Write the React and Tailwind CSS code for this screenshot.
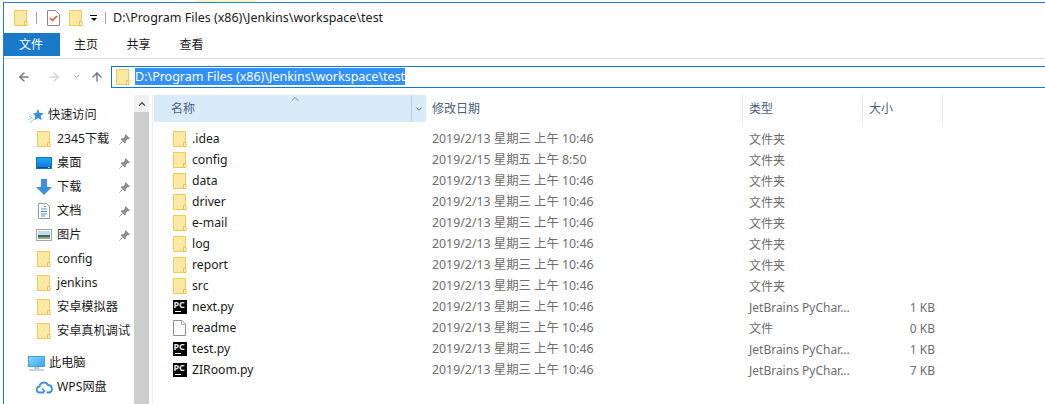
import { ArrowLeft, ArrowRight, ArrowUp, ChevronDown, ChevronUp } from 'lucide-react'

const FONT = { fontFamily: '"Noto Sans", "Noto Sans CJK SC", sans-serif' }

const Folder = () => (
    <svg width="14" height="16" viewBox="0 0 14 16">
        <path d="M.5.5h12v15H.5z" fill="#fde9a6" stroke="#f3c950" />
        <path d="M10.5 15.5v-4h2.500v4z" fill="#fff5cf" stroke="#eec04b" />
    </svg>
)

const PcIcon = () => (
    <div className="w-[14px] h-[14px] bg-black text-[#e8e8e8] text-[9px] leading-[9px] font-bold pl-[1px] relative">
        PC
        <div className="absolute left-[2px] bottom-[2px] w-[6px] h-[1px] bg-white"></div>
    </div>
)

const BlankFile = () => (
    <svg width="13" height="16" viewBox="0 0 13 16">
        <path d="M.5.5h8.5l3.500 3.500v11.500h-12z" fill="#fbfbfb" stroke="#8f8f8f" />
        <path d="M8.500.5v4h4" fill="none" stroke="#b5b5b5" />
    </svg>
)

const Star = () => (
    <svg width="16" height="15" viewBox="0 0 16 15">
        <path d="M10 1l1.600 4 4.200.3-3.200 2.700 1 4.300L10 10l-3.600 2.300 1-4.300-2.600-2.500 3.600-.4z" fill="#2f8fe0" />
        <path d="M0 12l4.500-3M1 8.500l3.500-1M2 14.500l4-3.500" stroke="#8cc0ee" fill="none" />
    </svg>
)

const Desktop = () => (
    <svg width="16" height="12" viewBox="0 0 16 12">
        <defs>
            <linearGradient id="desk" x1="0" y1="0" x2="0" y2="1">
                <stop offset="0" stopColor="#23a8f5" />
                <stop offset="1" stopColor="#0b74d6" />
            </linearGradient>
        </defs>
        <rect x=".5" y=".5" width="15" height="11" fill="url(#desk)" stroke="#0f6fc0" />
        <path d="M1 10.500h14" stroke="#0a4f96" />
        <path d="M12 10.500h1.500" stroke="#cfe8fb" />
    </svg>
)

const Download = () => (
    <svg width="16" height="16" viewBox="0 0 16 16">
        <path d="M5 0h6v8h5l-8 8-8-8h5z" fill="#3d8fdc" />
    </svg>
)

const Doc = () => (
    <svg width="12" height="16" viewBox="0 0 12 16">
        <path d="M.5.5h8l3 3v12h-11z" fill="#fff" stroke="#9a9a9a" />
        <path d="M6 3.500h2M3 6h6M3 8.500h6M3 11h6M3 13h4" stroke="#4a90d0" />
    </svg>
)

const Picture = () => (
    <svg width="16" height="12" viewBox="0 0 16 12">
        <rect x=".5" y=".5" width="15" height="11" fill="#fff" stroke="#a5a5a5" />
        <rect x="2" y="2" width="12" height="4" fill="#c5dcee" />
        <rect x="2" y="6" width="12" height="2" fill="#2f6f55" />
        <rect x="2" y="8" width="12" height="2" fill="#93a583" />
    </svg>
)

const Monitor = () => (
    <svg width="17" height="15" viewBox="0 0 17 15">
        <defs>
            <linearGradient id="mon" x1="0" y1="0" x2="1" y2="1">
                <stop offset="0" stopColor="#8ed6f8" />
                <stop offset="1" stopColor="#33a4ea" />
            </linearGradient>
        </defs>
        <rect x=".5" y=".5" width="16" height="10" fill="url(#mon)" stroke="#4a9fd8" />
        <path d="M6 11h5v2H6z" fill="#b5c9d8" />
        <path d="M1 14h15" stroke="#8aa8c0" />
    </svg>
)

const Cloud = () => (
    <svg width="17" height="14" viewBox="0 0 17 14">
        <path d="M8 12.500H4a3 3 0 0 1-.5-6A4.500 4.500 0 0 1 12 5a3.800 3.800 0 0 1 1 7.500h-2.500" fill="none" stroke="#3f8fe0" strokeWidth="1.800" />
        <path d="M6 8.500l2.500 2.500L6.500 13" fill="none" stroke="#3f8fe0" strokeWidth="1.500" />
    </svg>
)

const Pinned = () => (
    <svg width="11" height="11" viewBox="0 0 11 11">
        <path d="M6.500 0L11 4.500 9.800 5.200 8.900 4.900 6.900 6.900 6.800 8.800 5.800 9.500 1.700 5.300 2.300 4.300 4.200 4.200 6.100 2.100 5.800 1.200z" fill="#8a8f94" />
        <path d="M3.500 7.500L.5 10.500" stroke="#8a8f94" />
    </svg>
)

const quick = [
    { name: '2345下载', icon: <Folder />, pin: true },
    { name: '桌面', icon: <Desktop />, pin: true },
    { name: '下载', icon: <Download />, pin: true },
    { name: '文档', icon: <Doc />, pin: true },
    { name: '图片', icon: <Picture />, pin: true },
    { name: 'config', icon: <Folder /> },
    { name: 'jenkins', icon: <Folder /> },
    { name: '安卓模拟器', icon: <Folder /> },
    { name: '安卓真机调试', icon: <Folder /> },
]

const files = [
    { name: '.idea', date: '2019/2/13 星期三 上午 10:46', type: '文件夹', icon: <Folder /> },
    { name: 'config', date: '2019/2/15 星期五 上午 8:50', type: '文件夹', icon: <Folder /> },
    { name: 'data', date: '2019/2/13 星期三 上午 10:46', type: '文件夹', icon: <Folder /> },
    { name: 'driver', date: '2019/2/13 星期三 上午 10:46', type: '文件夹', icon: <Folder /> },
    { name: 'e-mail', date: '2019/2/13 星期三 上午 10:46', type: '文件夹', icon: <Folder /> },
    { name: 'log', date: '2019/2/13 星期三 上午 10:46', type: '文件夹', icon: <Folder /> },
    { name: 'report', date: '2019/2/13 星期三 上午 10:46', type: '文件夹', icon: <Folder /> },
    { name: 'src', date: '2019/2/13 星期三 上午 10:46', type: '文件夹', icon: <Folder /> },
    { name: 'next.py', date: '2019/2/13 星期三 上午 10:46', type: 'JetBrains PyChar...', size: '1 KB', icon: <PcIcon /> },
    { name: 'readme', date: '2019/2/13 星期三 上午 10:46', type: '文件', size: '0 KB', icon: <BlankFile /> },
    { name: 'test.py', date: '2019/2/13 星期三 上午 10:46', type: 'JetBrains PyChar...', size: '1 KB', icon: <PcIcon /> },
    { name: 'ZIRoom.py', date: '2019/2/13 星期三 上午 10:46', type: 'JetBrains PyChar...', size: '7 KB', icon: <PcIcon /> },
]

export default function App() {
    return (
        <div className="w-[1045px] h-[404px] overflow-hidden bg-white text-[12px] text-[#1a1a1a] flex flex-col" style={FONT}>
            {/* sliver of the window behind */}
            <div className="h-[2px] shrink-0 pl-[195px]">
                <div className="w-[62px] h-full bg-[#fdf6c8]"></div>
            </div>
            <div className="flex-1 min-h-0 ml-[3px] flex flex-col border-l-[1px] border-t-[1px] border-[#2a80cc]">
                {/* title bar */}
                <div className="h-[30px] shrink-0 flex items-center pl-[10px]">
                    <Folder />
                    <div className="w-[1px] h-[12px] bg-[#a0a0a0] ml-[8px] mr-[10px]"></div>
                    <svg width="13" height="16" viewBox="0 0 13 16">
                        <path d="M.5.5h8l4 4v11h-12z" fill="#fff" stroke="#8a8a8a" />
                        <path d="M3 8l2.500 2.500L10 6" fill="none" stroke="#e0562a" strokeWidth="1.500" />
                    </svg>
                    <div className="ml-[9px] flex"><Folder /></div>
                    <div className="ml-[7px] w-[7px] flex flex-col items-center gap-[2px]">
                        <div className="w-[7px] h-[1px] bg-black"></div>
                        <div className="w-0 h-0 border-l-[3px] border-r-[3px] border-t-[3px] border-l-transparent border-r-transparent border-t-black"></div>
                    </div>
                    <div className="w-[1px] h-[12px] bg-[#a0a0a0] ml-[8px] mr-[7px]"></div>
                    <span className="text-[12.5px]">D:\Program Files (x86)\Jenkins\workspace\test</span>
                </div>
                {/* ribbon tabs */}
                <div className="h-[23px] shrink-0 flex items-stretch">
                    <div className="w-[56px] bg-[#1979ca] text-white flex items-center justify-center pr-[2px] pt-[1px]">文件</div>
                    <div className="w-[52px] flex items-center justify-center pt-[1px]">主页</div>
                    <div className="w-[53px] flex items-center justify-center pt-[1px]">共享</div>
                    <div className="w-[53px] flex items-center justify-center pt-[1px]">查看</div>
                </div>
                <div className="h-[3px] shrink-0 border-b border-[#dadada]"></div>
                {/* address bar */}
                <div className="h-[36px] shrink-0 flex items-center pl-[13px] pb-[1px]">
                    <ArrowLeft size={14} strokeWidth={2.5} className="text-[#7a7a7a]" />
                    <ArrowRight size={14} strokeWidth={2.5} className="text-[#d4d4d4] ml-[16px]" />
                    <ChevronDown size={9} strokeWidth={2.5} className="text-[#9a9a9a] ml-[11px]" />
                    <ArrowUp size={14} strokeWidth={2.5} className="text-[#7a7a7a] ml-[9px]" />
                    <div className="ml-[7px] flex-1 h-[22px] border border-r-0 border-[#0f78d4] flex items-center pl-[4px]">
                        <Folder />
                        <span className="ml-[5px] bg-[#3390ff] text-white text-[12.5px] h-[17px] leading-[17px]">D:\Program Files (x86)\Jenkins\workspace\test</span>
                    </div>
                </div>
                {/* body */}
                <div className="flex-1 min-h-0 flex">
                    {/* nav pane */}
                    <div className="w-[130px] shrink-0 pt-[8px] pl-[25px] text-[12.2px]">
                        <div className="h-[24px] flex items-center">
                            <div className="w-[20px] -ml-[1px]"><Star /></div>
                            <span>快速访问</span>
                        </div>
                        {quick.map((q) => (
                            <div key={q.name} className="h-[24px] flex items-center">
                                <div className="w-[16px] shrink-0 flex justify-center ml-[7px] mr-[5px]">{q.icon}</div>
                                <span className="flex-1 whitespace-nowrap">{q.name}</span>
                                {q.pin && <div className="mr-[4px] flex"><Pinned /></div>}
                            </div>
                        ))}
                        <div className="h-[8px]"></div>
                        <div className="h-[24px] flex items-center -ml-[1px]">
                            <div className="w-[21px] flex"><Monitor /></div>
                            <span>此电脑</span>
                        </div>
                        <div className="h-[24px] flex items-center pl-[7px]">
                            <div className="w-[21px] flex"><Cloud /></div>
                            <span>WPS网盘</span>
                        </div>
                    </div>
                    {/* scrollbar */}
                    <div className="w-[15px] shrink-0 bg-[#f0f0f0] flex flex-col">
                        <div className="h-[17px] flex items-center justify-center">
                            <ChevronUp size={10} strokeWidth={3} className="text-[#505050]" />
                        </div>
                        <div className="flex-1 bg-[#cdcdcd]"></div>
                    </div>
                    {/* file list */}
                    <div className="flex-1 ml-[3px] border-l border-[#f0f0f0] pl-[1px] text-[#6d6d6d]">
                        <div className="flex h-[27px] text-[#4c607a]">
                            <div className="w-[272px] bg-[#d9ebf9] flex items-center relative">
                                <span className="pl-[17px]">名称</span>
                                <ChevronUp size={12} strokeWidth={1.5} className="absolute left-[135px] -top-[2px] text-[#6d6d6d]" />
                                <div className="absolute right-0 top-0 bottom-0 w-[15px] border-l border-[#b8cfe2] flex items-center justify-center">
                                    <ChevronDown size={10} strokeWidth={2} className="text-[#505050]" />
                                </div>
                            </div>
                            <div className="w-[317px] flex items-center pl-[6px] border-r border-[#e5e5e5]">修改日期</div>
                            <div className="w-[120px] flex items-center pl-[6px] border-r border-[#e5e5e5]">类型</div>
                            <div className="w-[80px] flex items-center pl-[6px] border-r border-[#e5e5e5]">大小</div>
                        </div>
                        <div className="pt-[7px]">
                            {files.map((f) => (
                                <div key={f.name} className="flex h-[21px] items-center">
                                    <div className="w-[38px] shrink-0 flex justify-center pl-[13px] pb-[2px]">{f.icon}</div>
                                    <div className="w-[240px] text-[#1a1a1a] text-[12.2px]">{f.name}</div>
                                    <div className="w-[317px] whitespace-nowrap text-[12.35px]">{f.date}</div>
                                    <div className="w-[120px] whitespace-nowrap">{f.type}</div>
                                    <div className="w-[66px] text-right">{f.size}</div>
                                </div>
                            ))}
                        </div>
                    </div>
                </div>
            </div>
        </div>
    )
}
